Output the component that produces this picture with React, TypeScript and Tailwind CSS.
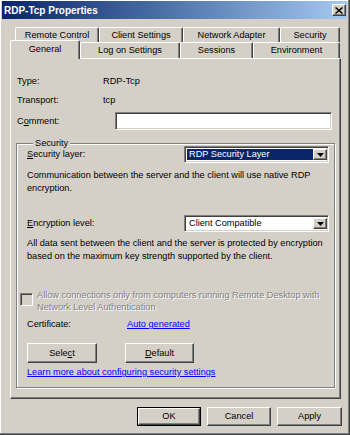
import React from 'react';

// Win2k-style 3D edges
const raised =
  'border border-t-white border-l-white border-r-[#404040] border-b-[#404040] shadow-[inset_-1px_-1px_0_#808080]';
const sunken =
  'border border-t-[#808080] border-l-[#808080] border-r-white border-b-white shadow-[inset_1px_1px_0_#404040,inset_-1px_-1px_0_#d4d0c8]';
const tabEdge =
  'border-t border-l border-r border-t-white border-l-white border-r-[#404040] rounded-t-[2px] shadow-[inset_-1px_0_0_#808080]';

function Tab({ label, width, selected }: { label: string; width: string; selected?: boolean }) {
  if (selected) {
    return (
      <div
        className={`${tabEdge} ${width} relative z-10 -mt-[2px] h-[19px] bg-[#d4d0c8] flex justify-center pt-[2px]`}
      >
        {label}
      </div>
    );
  }
  return (
    <div className={`${tabEdge} ${width} h-full flex items-center justify-center`}>{label}</div>
  );
}

function Combo({ value, focused }: { value: string; focused?: boolean }) {
  return (
    <div className={`${sunken} w-[145px] h-[17px] bg-white flex p-[2px] pr-[1px]`}>
      <div
        className={`flex-1 flex items-center pl-[2px] ${
          focused ? 'bg-[#0a246a] text-white' : 'text-black'
        }`}
      >
        {value}
      </div>
      <div className={`${raised} w-[14px] h-full bg-[#d4d0c8] flex items-center justify-center`}>
        <svg width="7" height="4" viewBox="0 0 7 4">
          <polygon points="0,0 7,0 3.5,4" fill="#000" />
        </svg>
      </div>
    </div>
  );
}

function Button({ children, width, isDefault }: { children: React.ReactNode; width: string; isDefault?: boolean }) {
  if (isDefault) {
    return (
      <div className={`${width} h-[19px] border border-black flex`}>
        <div className={`${raised} flex-1 flex items-center justify-center`}>{children}</div>
      </div>
    );
  }
  return <div className={`${raised} ${width} flex items-center justify-center`}>{children}</div>;
}

export default function App() {
  return (
    <div className="w-[350px] h-[435px] bg-[#d4d0c8] text-black font-['Liberation_Sans',Arial,sans-serif] text-[9.2px] leading-[13px] flex flex-col border-r border-b border-r-[#404040] border-b-[#404040] shadow-[inset_-1px_-1px_0_#808080,inset_1px_1px_0_#fff]">
      {/* Title bar */}
      <div className="mt-[1px] mx-[2px] h-[18px] bg-linear-to-r from-[#0a246a] to-[#a6caf0] flex items-center justify-between pl-[2px] pr-[1px]">
        <span className="text-white font-bold text-[10px]">RDP-Tcp Properties</span>
        <div className={`${raised} w-[14px] h-[12px] bg-[#d4d0c8] flex items-center justify-center`}>
          <svg width="8" height="7" viewBox="0 0 8 7">
            <path d="M0.5 0.5L7.5 6.5M7.5 0.5L0.5 6.5" stroke="#000" strokeWidth="1.5" />
          </svg>
        </div>
      </div>

      {/* Tabs */}
      <div className="mt-[8px] flex h-[15px] ml-[15px]">
        <Tab label="Remote Control" width="w-[84px]" />
        <Tab label="Client Settings" width="w-[84px]" />
        <Tab label="Network Adapter" width="w-[97px]" />
        <Tab label="Security" width="w-[60px]" />
      </div>
      <div className="flex h-[16px] ml-[10px]">
        <Tab label="General" width="w-[70px]" selected />
        <Tab label="Log on Settings" width="w-[100px]" />
        <Tab label="Sessions" width="w-[73px]" />
        <Tab label="Environment" width="w-[87px]" />
      </div>

      {/* Tab panel */}
      <div className={`${raised} ml-[10px] w-[331px] h-[341px] flex flex-col pt-[16px]`}>
        <div className="flex h-[13px] items-center pl-[6px]">
          <span className="w-[86px]">Type:</span>
          <span>RDP-Tcp</span>
        </div>
        <div className="flex h-[13px] items-center pl-[6px] mt-[6px]">
          <span className="w-[86px]">Transport:</span>
          <span>tcp</span>
        </div>
        <div className="flex h-[18px] items-center pl-[6px] pr-[8px] mt-[5px]">
          <span>
            C<u>o</u>mment:
          </span>
          <div className={`${sunken} ml-auto w-[217px] h-[18px] bg-white`} />
        </div>

        <fieldset className="mt-[7px] mx-[5px] border border-[#808080] shadow-[1px_1px_0_#fff,inset_1px_1px_0_#fff] pl-[10px] pr-[5px] pb-[8px]">
          <legend className="ml-[6px] px-[2px] leading-[12px] bg-[#d4d0c8]">Security</legend>

          <div className="-mt-[3px] h-[17px] flex items-center justify-between">
            <span>
              <u>S</u>ecurity layer:
            </span>
            <Combo value="RDP Security Layer" focused />
          </div>
          <p className="mt-[6px]">
            Communication between the server and the client will use native RDP
            <br />
            encryption.
          </p>

          <div className="mt-[20px] h-[17px] flex items-center justify-between">
            <span>
              <u>E</u>ncryption level:
            </span>
            <Combo value="Client Compatible" />
          </div>
          <p className="mt-[5px]">
            All data sent between the client and the server is protected by encryption
            <br />
            based on the maximum key strength supported by the client.
          </p>

          <div className="mt-[26px] -ml-[7px] flex items-start">
            <div className={`${sunken} mt-[4px] w-[13px] h-[13px] bg-[#d4d0c8] shrink-0`} />
            <p className="ml-[4px] leading-[12px] text-[#808080] [text-shadow:1px_1px_0_#fff]">
              Allow connections only from computers running Remote Desktop with
              <br />
              Network Level Authentication
            </p>
          </div>

          <div className="mt-[5px] h-[13px] flex items-center">
            <span className="w-[100px]">Certificate:</span>
            <span className="text-[#0000ff] underline">Auto generated</span>
          </div>

          <div className="mt-[12px] h-[20px] flex">
            <Button width="w-[70px]">
              Sele<u>c</u>t
            </Button>
            <div className="w-[28px]" />
            <Button width="w-[69px]">
              <u>D</u>efault
            </Button>
          </div>

          <div className="mt-[3px] h-[13px] flex items-center">
            <span className="text-[#0000ff] underline">Learn more about configuring security settings</span>
          </div>
        </fieldset>
      </div>

      {/* Dialog buttons */}
      <div className="mt-[8px] h-[19px] flex justify-end gap-[6px] pr-[7px]">
        <Button width="w-[64px]" isDefault>
          OK
        </Button>
        <Button width="w-[64px]">Cancel</Button>
        <Button width="w-[65px]">Apply</Button>
      </div>
    </div>
  );
}
